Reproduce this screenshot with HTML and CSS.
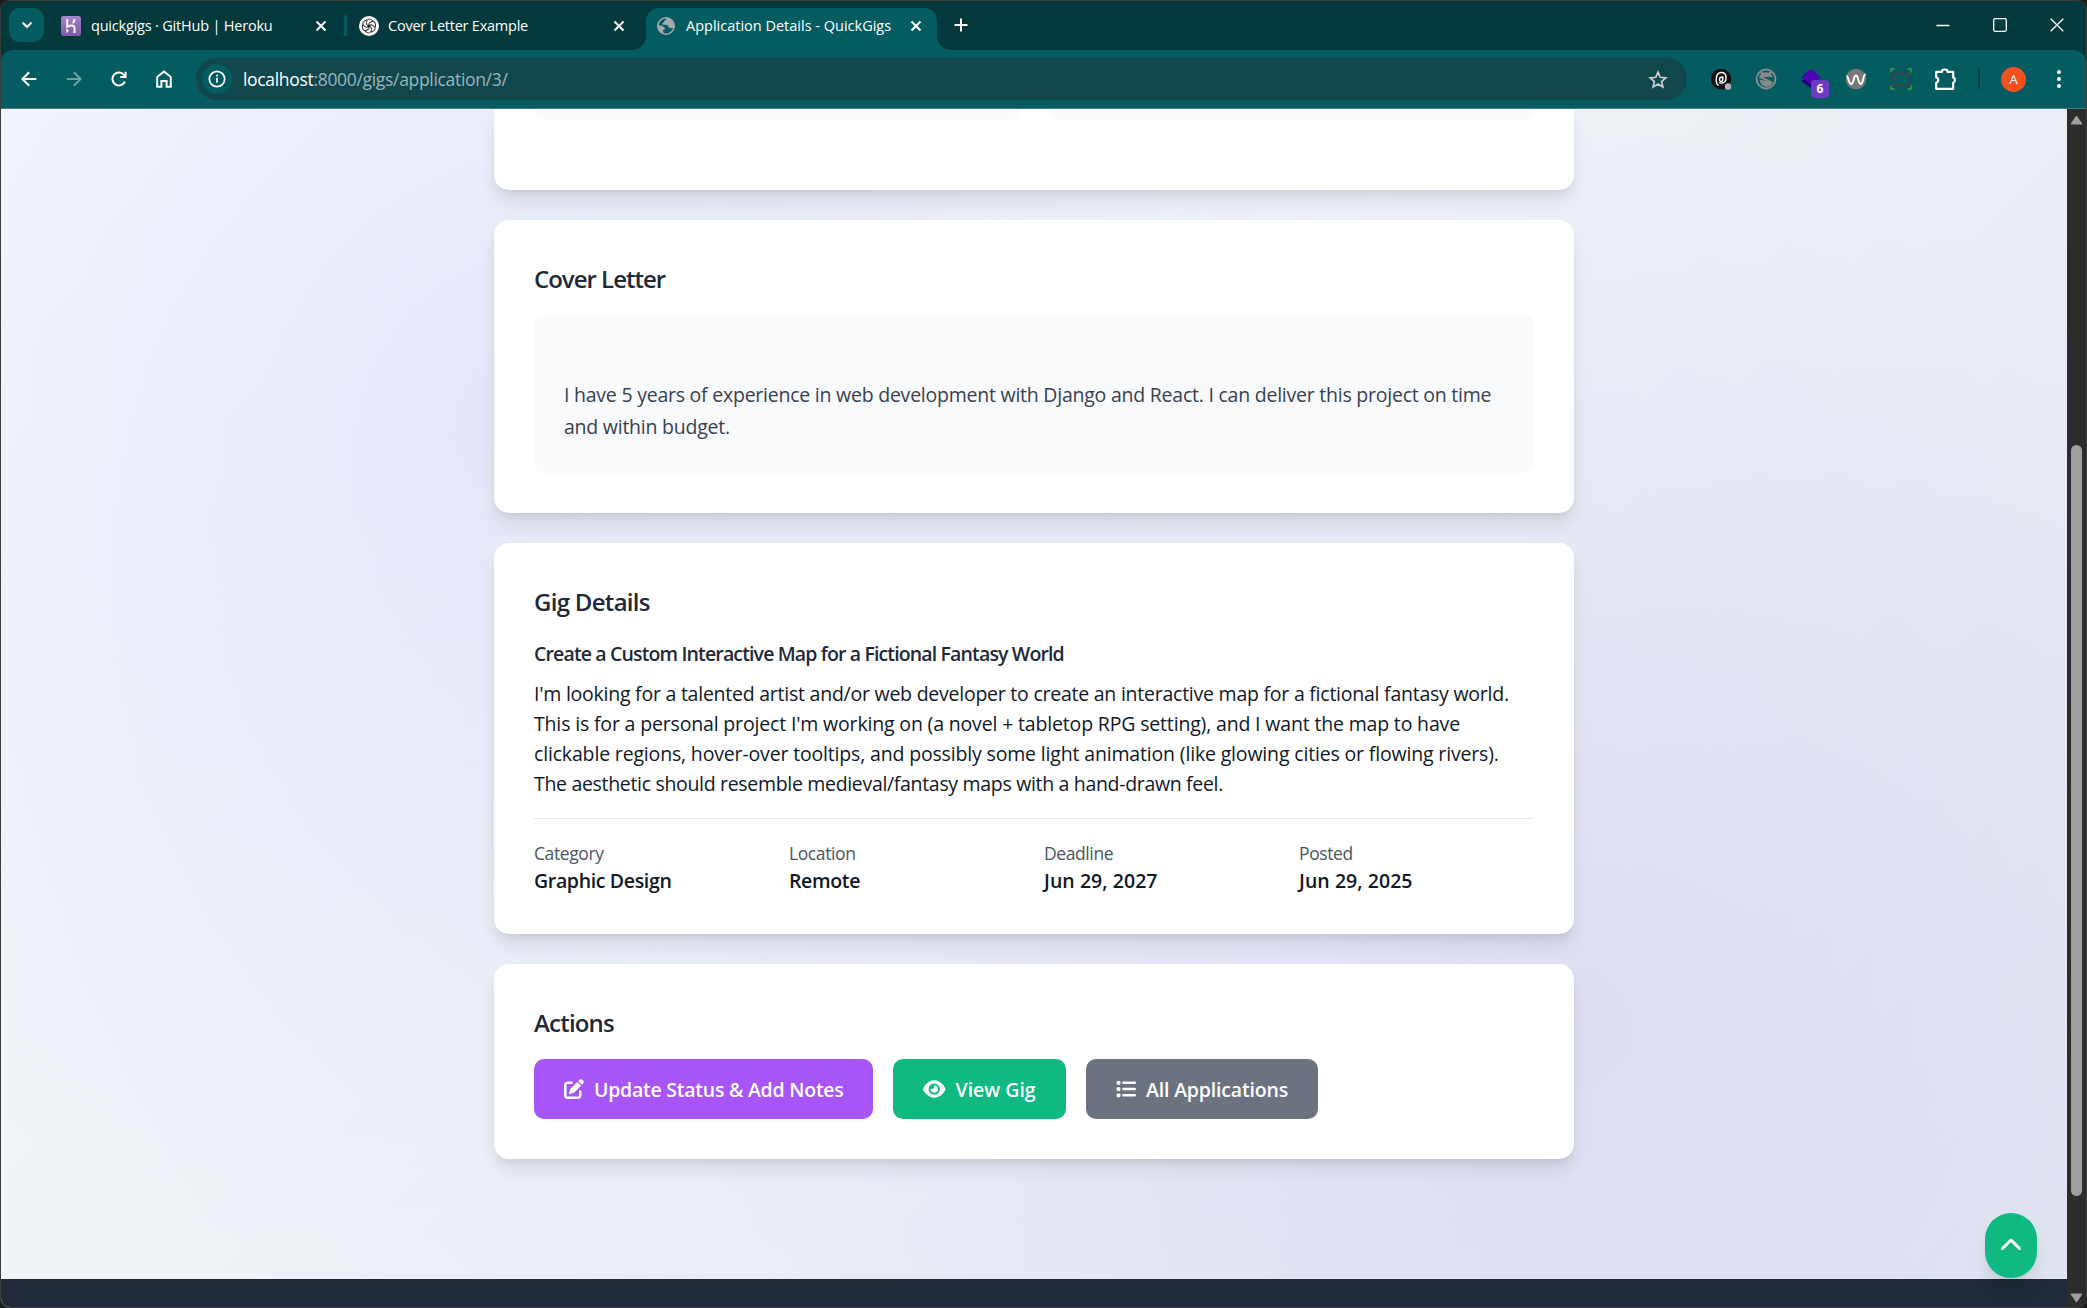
FILE: index.html
```
<!DOCTYPE html>
<html lang="en">
<head>
<meta charset="utf-8">
<title>Application Details - QuickGigs</title>
<link rel="stylesheet" href="styles.css">
</head>
<body>
<div class="window">
  <header class="tabstrip">
    <button class="tab-search" aria-label="Search tabs"><svg width="12" height="8" viewBox="0 0 12 8"><path d="M1.500 1.500 6 6l4.500-4.500" fill="none" stroke="#fff" stroke-width="2"/></svg></button>
    <div class="tab tab-first">
      <svg class="favicon" width="20" height="20" viewBox="0 0 20 20"><defs><linearGradient id="hk" x2="0" y2="1"><stop offset="0" stop-color="#a584cc"/><stop offset="1" stop-color="#7e58a8"/></linearGradient></defs><rect width="20" height="20" rx="2.500" fill="url(#hk)"/><path d="M6.200 3v7.800c2.600-1.300 7.300-2.200 7.300.6V17M13.500 3c0 1.800-.7 3-1.700 4" fill="none" stroke="#fff" stroke-width="1.900"/><path d="M5.300 12.500 8 14.800l-2.700 2.400z" fill="#fff"/></svg>
      <span class="tab-title title-heroku">quickgigs · GitHub | Heroku</span>
      <svg class="close" width="12" height="12" viewBox="0 0 12 12"><path d="m1.500 1.500 9 9m0-9-9 9"/></svg>
    </div>
    <i class="tab-sep"></i>
    <div class="tab tab-second">
      <svg class="favicon" width="20" height="20" viewBox="0 0 20 20"><circle cx="10" cy="10" r="10" fill="#fff"/><g fill="none" stroke="#222" stroke-width=".9"><path id="petal" d="M7.600 8.600V5.700a2.800 2.800 0 0 1 4.300-2.100l2.500 1.500M7.600 8.600l3.900 2.300"/><use href="#petal" transform="rotate(60 10 10)"/><use href="#petal" transform="rotate(120 10 10)"/><use href="#petal" transform="rotate(180 10 10)"/><use href="#petal" transform="rotate(240 10 10)"/><use href="#petal" transform="rotate(300 10 10)"/></g></svg>
      <span class="tab-title title-letter">Cover Letter Example</span>
      <svg class="close" width="12" height="12" viewBox="0 0 12 12"><path d="m1.500 1.500 9 9m0-9-9 9"/></svg>
    </div>
    <div class="tab tab-active">
      <svg class="favicon" width="18" height="18" viewBox="0 0 18 18"><circle cx="9" cy="9" r="8.200" fill="none" stroke="#a3abb0" stroke-width="1.600"/><path d="M9.500 1c-.2 1.500-.4 2.300-2 2.600C6.800 5 6.400 5.700 5.600 6.200v1.600h4.200c1 .2 1.300 1 1.200 1.900l1.700 1.100c1 .7 2.700.2 4 .2A8.500 8.500 0 0 0 9.500 1zM1 8.500h3.500l3.300 2.300v1.400l-2 1 1.200 3.500A8.300 8.300 0 0 1 1 8.500z" fill="#a3abb0"/></svg>
      <span class="tab-title">Application Details - QuickGigs</span>
      <svg class="close" width="12" height="12" viewBox="0 0 12 12"><path d="m1.500 1.500 9 9m0-9-9 9"/></svg>
    </div>
    <svg class="new-tab" width="14" height="14" viewBox="0 0 14 14"><path d="M7 .5v13M.5 7h13" stroke="#fff" stroke-width="2"/></svg>
    <div class="window-controls">
      <svg width="14" height="14" viewBox="0 0 14 14"><path d="M.5 7.500h13"/></svg>
      <svg width="14" height="14" viewBox="0 0 14 14"><rect x=".7" y=".7" width="12.600" height="12.600" rx="1.500"/></svg>
      <svg width="14" height="14" viewBox="0 0 14 14"><path d="m.7.7 12.600 12.600m0-12.600L.7 13.300"/></svg>
    </div>
  </header>

  <nav class="toolbar">
    <button class="tool" aria-label="Back"><svg width="16" height="16" viewBox="0 0 16 16"><path d="M15.300 8H2M8.200 1.200 1.400 8l6.800 6.800"/></svg></button>
    <button class="tool tool-off" aria-label="Forward"><svg width="16" height="16" viewBox="0 0 16 16"><path d="M.7 8H14M7.800 1.200 14.600 8l-6.800 6.800"/></svg></button>
    <button class="tool" aria-label="Reload"><svg width="16" height="16" viewBox="0 0 16 16"><path d="M13.900 10.500A6.500 6.500 0 1 1 13 3.800l1.200 1.700M14.600.7v5.200H9.300"/></svg></button>
    <button class="tool" aria-label="Home"><svg width="16" height="18" viewBox="0 0 16 18"><path d="M1.200 16.800V7L8 1.500 14.800 7v9.800h-4.200v-5.900H5.400v5.900z"/></svg></button>
    <div class="omnibox">
      <span class="site-info"><svg width="18" height="18" viewBox="0 0 18 18"><circle cx="9" cy="9" r="7.700" fill="none" stroke="#fff" stroke-width="1.700"/><path d="M9 7.800v5M9 4.800v1.700" stroke="#fff" stroke-width="1.700"/></svg></span>
      <span class="url"><b>localhost</b>:8000/gigs/application/3/</span>
      <svg class="star" width="20" height="19" viewBox="0 0 20 19"><path d="m10 2.200 2.200 5.100 5.600.5-4.200 3.700 1.300 5.500L10 14.100 5.100 17l1.300-5.500-4.200-3.700 5.600-.5z" fill="none" stroke="#c8cdd0" stroke-width="1.700"/></svg>
    </div>
    <div class="extensions">
      <span class="tool"><svg width="22" height="22" viewBox="0 0 22 22"><circle cx="11" cy="11" r="10.300" fill="#111"/><path d="M12.800 8.200v3.300c0 2.500-3.300 2.800-3.300 0s3.300-3 3.300-.5M8.500 17.500c-3.500-2.500-3.200-13 2.700-13 6.500 0 6 9.500 1.300 10.500-2 .4-3.500-.5-3.500-.5" fill="none" stroke="#fff" stroke-width="1.400"/><circle cx="18" cy="18.500" r="3.200" fill="#b5b5b5"/></svg></span>
      <span class="tool"><svg width="22" height="22" viewBox="0 0 22 22"><circle cx="11" cy="11" r="9.400" fill="none" stroke="#85898a" stroke-width="2"/><path d="M7 5.500 6 3M15 5.500 16 3M6 8c2-3.500 8-3.500 10 0zM4.500 8.500l13 6.500M6 13c1.500 5.500 8 6 10 2.500z" fill="#85898a" stroke="#85898a" stroke-width="2.200"/></svg></span>
      <span class="tool tool-badge"><svg width="22" height="22" viewBox="0 0 22 22"><path d="m1 13 10-5 10 5-10 7z" fill="#24007f"/><path d="m1 9 10-8 10 8-10 7z" fill="#4b05b2"/></svg><b class="badge">6</b></span>
      <span class="tool"><svg width="22" height="22" viewBox="0 0 22 22"><circle cx="11" cy="11" r="10.300" fill="#787878"/><path d="M1.500 8c2 0 2 8 4.800 8s2-8.500 4.700-8.500 2 8.500 4.700 8.500 2-8 4.800-10" fill="none" stroke="#fff" stroke-width="1.900"/></svg></span>
      <span class="tool"><svg width="22" height="22" viewBox="0 0 22 22"><path d="M1 4.500V1h3.500M17.500 1H21v3.500M1 17.500V21h3.500M17.500 21H21v-3.500" fill="none" stroke="#2f8f3a" stroke-width="1.900"/><rect x="3.500" y="5.500" width="15" height="11.500" fill="none" stroke="#3b4649" stroke-width="2"/></svg></span>
      <span class="tool"><svg width="24" height="24" viewBox="0 0 22 22"><path d="M2 4.500h5.200a2.600 2.200 0 0 1 5.200 0h5.200v5a2.200 2.600 0 0 1 0 5V20H2v-5.500a2.600 2.600 0 0 0 0-5z" fill="none" stroke="#fff" stroke-width="2" stroke-linejoin="round"/></svg></span>
      <i class="tool-sep"></i>
      <span class="tool"><b class="avatar">A</b></span>
      <span class="tool"><svg width="4" height="18" viewBox="0 0 4 18"><g fill="#fff"><circle cx="2" cy="2" r="2"/><circle cx="2" cy="9" r="2"/><circle cx="2" cy="16" r="2"/></g></svg></span>
    </div>
  </nav>

  <div class="viewport">
    <div class="page">
      <main class="content">
        <section class="card card-summary"><div class="stub"></div><div class="stub"></div></section>
        <section class="card card-letter">
          <h2>Cover Letter</h2>
          <div class="letter"><p>I have 5 years of experience in web development with Django and React. I can deliver this project on time<br>and within budget.</p></div>
        </section>
        <section class="card card-gig">
          <h2 class="h-gig">Gig Details</h2>
          <h3>Create a Custom Interactive Map for a Fictional Fantasy World</h3>
          <p class="description">I'm looking for a talented artist and/or web developer to create an interactive map for a fictional fantasy world.<br><span class="loose">This is for a personal project I'm working on (a novel + tabletop RPG setting), and I want the map to have<br>clickable regions, hover-over tooltips, and possibly some light animation (like glowing cities or flowing rivers).</span><br><span class="tight">The aesthetic should resemble medieval/fantasy maps with a hand-drawn feel.</span></p>
          <dl class="facts">
            <div><dt>Category</dt><dd>Graphic Design</dd></div>
            <div><dt>Location</dt><dd>Remote</dd></div>
            <div><dt>Deadline</dt><dd class="date">Jun 29, 2027</dd></div>
            <div><dt>Posted</dt><dd class="date">Jun 29, 2025</dd></div>
          </dl>
        </section>
        <section class="card card-actions">
          <h2 class="h-actions">Actions</h2>
          <div class="buttons">
            <a class="btn btn-update"><svg width="20" height="20" viewBox="0 0 512 512"><path fill="#fff" d="M471.600 21.700c-21.900-21.900-57.300-21.900-79.200 0L362.300 51.700l97.900 97.900 30.100-30.100c21.900-21.900 21.900-57.300 0-79.200L471.600 21.700zm-299.200 220c-6.100 6.100-10.800 13.600-13.500 21.900l-29.600 88.800c-2.900 8.600-.6 18.100 5.800 24.600s15.900 8.700 24.600 5.800l88.800-29.600c8.200-2.700 15.700-7.400 21.900-13.500L437.700 172.300 339.700 74.300 172.400 241.700zM96 64C43 64 0 107 0 160V416c0 53 43 96 96 96H352c53 0 96-43 96-96V320c0-17.700-14.300-32-32-32s-32 14.300-32 32v96c0 17.700-14.300 32-32 32H96c-17.700 0-32-14.300-32-32V160c0-17.700 14.300-32 32-32h96c17.700 0 32-14.300 32-32s-14.300-32-32-32H96z"/></svg>Update Status &amp; Add Notes</a>
            <a class="btn btn-view"><svg width="22.500" height="20" viewBox="0 0 576 512"><path fill="#fff" d="M288 32c-80.800 0-145.500 36.800-192.600 80.600C48.600 156 17.300 208 2.500 243.700c-3.300 7.900-3.300 16.700 0 24.600C17.300 304 48.600 356 95.400 399.400C142.500 443.200 207.200 480 288 480s145.500-36.800 192.600-80.600c46.800-43.500 78.100-95.400 93-131.100c3.300-7.900 3.300-16.700 0-24.600c-14.900-35.700-46.200-87.700-93-131.100C433.500 68.800 368.800 32 288 32zM144 256a144 144 0 1 1 288 0 144 144 0 1 1 -288 0zm144-64c0 35.300-28.700 64-64 64c-7.100 0-13.900-1.200-20.300-3.300c-5.500-1.800-11.900 1.600-11.700 7.400c.3 6.900 1.300 13.800 3.200 20.700c13.700 51.200 66.400 81.600 117.600 67.900s81.600-66.400 67.900-117.600c-11.100-41.500-47.800-69.400-88.600-71.100c-5.800-.2-9.200 6.100-7.400 11.700c2.100 6.400 3.300 13.200 3.300 20.300z"/></svg>View Gig</a>
            <a class="btn btn-all"><svg width="20" height="20" viewBox="0 0 512 512"><g fill="#fff"><rect x="16" y="48" width="96" height="96" rx="24"/><rect x="16" y="208" width="96" height="96" rx="24"/><rect x="16" y="368" width="96" height="96" rx="24"/><rect x="160" y="64" width="352" height="64" rx="32"/><rect x="160" y="224" width="352" height="64" rx="32"/><rect x="160" y="384" width="352" height="64" rx="32"/></g></svg>All Applications</a>
          </div>
        </section>
      </main>
      <footer class="footer"></footer>
      <a class="to-top"><svg width="22" height="14" viewBox="0 0 22 14"><path d="m2.500 11.500 8.500-8.500 8.500 8.500" fill="none" stroke="#fff" stroke-width="3" stroke-linecap="round" stroke-linejoin="round"/></svg></a>
    </div>
    <div class="scrollbar">
      <svg width="13" height="10" viewBox="0 0 13 10"><path d="M6.500 1 12 9H1z" fill="#9f9f9f" stroke="#9f9f9f" stroke-linejoin="round"/></svg>
      <i class="thumb"></i>
      <svg class="arrow-down" width="13" height="10" viewBox="0 0 13 10"><path d="M6.500 9 12 1H1z" fill="#9f9f9f" stroke="#9f9f9f" stroke-linejoin="round"/></svg>
    </div>
  </div>
</div>
</body>
</html>
```
FILE: styles.css
```
* { box-sizing: border-box; }
body { margin: 0; background: #1c1c1c; font-family: "Open Sans", "Noto Sans", sans-serif; }
button { border: 0; padding: 0; background: none; }
h2, h3, p, dl, dd { margin: 0; }
svg { display: block; flex: none; }

.window {
  width: 2087px; height: 1308px; overflow: hidden;
  display: flex; flex-direction: column;
  border: 1px solid #3d3d3d; border-radius: 10px;
  background: #01393d;
}

/* Tab strip */
.tabstrip { height: 49px; flex: none; display: flex; align-items: flex-start; padding: 7px 22px 0 8px; }
.tab-search { width: 35px; height: 34px; border-radius: 11px; background: #045c61; display: grid; place-items: center; }
.tab { height: 42px; display: flex; align-items: center; padding-bottom: 7px; color: #fff; }
.tab-title { flex: 1; font-size: 14.500px; line-height: 20px; white-space: nowrap; margin-left: 10px; }
.title-heroku { letter-spacing: -0.200px; }
.title-letter { letter-spacing: -0.230px; }
.close { fill: none; stroke: #fff; stroke-width: 2; }
.tab-first { width: 266px; margin-left: 17px; }
.tab-sep { width: 3px; height: 21px; margin: 7px 0 0 17px; border-radius: 2px; background: #045c61; }
.tab-second { width: 265px; margin-left: 12px; }
.tab-second .tab-title { margin-left: 9px; }
.tab-second .close { margin-right: -1px; }
.tab-active {
  position: relative; width: 291px; margin-left: 22px; padding: 0 15px 7px 11px;
  background: #045c61; border-radius: 13px 13px 0 0;
}
.tab-active .tab-title { margin-left: 11px; }
.tab-active::before, .tab-active::after { content: ""; position: absolute; bottom: 0; width: 13px; height: 13px; }
.tab-active::before { left: -13px; background: radial-gradient(circle at 0 0, transparent 12.500px, #045c61 13px); }
.tab-active::after { right: -13px; background: radial-gradient(circle at 100% 0, transparent 12.500px, #045c61 13px); }
.new-tab { margin: 10px 0 0 17px; }
.window-controls { margin: 10px 0 0 auto; display: flex; gap: 43px; fill: none; stroke: #fff; stroke-width: 1.300; }

/* Toolbar */
.toolbar {
  height: 59px; flex: none; display: flex; align-items: center; padding: 0 5px;
  background: #045c61; border-bottom: 1px solid #3e8085; border-radius: 12px 12px 0 0;
}
.tool { width: 45px; height: 42px; flex: none; display: grid; place-items: center; fill: none; stroke: #fff; stroke-width: 2; }
.tool-off { opacity: .42; }
.extensions .tool { stroke: none; }
.omnibox { flex: 1; height: 42px; margin-left: 10px; display: flex; align-items: center; padding: 0 19px 0 6px; border-radius: 21px; background: #0f474d; }
.site-info { width: 30px; height: 30px; border-radius: 50%; background: #045c61; display: grid; place-items: center; }
.url { flex: 1; margin-left: 11px; font-size: 17.500px; line-height: 24px; letter-spacing: -0.320px; color: #9bb5b8; }
.url b { font-weight: 400; color: #fff; }
.extensions { display: flex; align-items: center; margin-left: 11px; }
.tool-badge { position: relative; }
.badge {
  position: absolute; left: 23px; top: 22px; width: 18px; height: 18px; border-radius: 4px;
  background: #6e3bc4; color: #fff; font-size: 12px; line-height: 18px; text-align: center;
}
.tool-sep { width: 2px; height: 20px; margin: 0 11px 0 10px; background: #014146; }
.avatar { width: 25px; height: 25px; border-radius: 50%; background: #f4511e; color: #fff; font-size: 13px; font-weight: 400; line-height: 25px; text-align: center; }

/* Page */
.viewport { flex: 1; min-height: 0; display: flex; }
.page {
  position: relative; flex: 1; display: flex; flex-direction: column; align-items: center; overflow: hidden;
  background:
    radial-gradient(circle at 25% 25%, rgba(99, 102, 241, .1) 0%, transparent 50%),
    radial-gradient(circle at 75% 75%, rgba(139, 92, 246, .1) 0%, transparent 50%),
    linear-gradient(135deg, #f8fafc 0%, #e2e8f0 100%);
}
.content { width: 1080px; flex: 1; display: flex; flex-direction: column; gap: 30px; }
.card {
  padding: 40px; border-radius: 15px; background: #fff;
  box-shadow: 0 12.500px 18.750px -3.750px rgba(0, 0, 0, .1), 0 5px 7.500px -2.500px rgba(0, 0, 0, .05);
}
.card-summary { height: 81px; padding-top: 0; border-radius: 0 0 15px 15px; display: grid; grid-template-columns: 1fr 1fr; gap: 30px; }
.stub { height: 11px; border-radius: 0 0 10px 10px; background: #f9fafb; }
.card h2 { font-size: 24px; line-height: 38px; font-weight: 600; letter-spacing: -1px; color: #1f2937; }
.card .h-gig { letter-spacing: -0.700px; }
.card .h-actions { letter-spacing: -0.800px; }
.card-letter { height: 293px; }
.letter { height: 158px; margin-top: 17px; padding: 64px 30px 0; border-radius: 10px; background: #f9fafb; }
.letter p { font-size: 19.500px; line-height: 32px; letter-spacing: -0.236px; color: #374151; white-space: nowrap; }
.card-gig { height: 391px; }
.card h3 { margin-top: 18px; font-size: 19.500px; line-height: 30px; font-weight: 600; letter-spacing: -0.860px; color: #1f2937; }
.description { margin-top: 10px; font-size: 19.500px; line-height: 30px; letter-spacing: -0.240px; color: #111827; white-space: nowrap; }
.loose { letter-spacing: -0.165px; }
.tight { letter-spacing: -0.320px; }
.facts { margin-top: 19px; padding-top: 21px; border-top: 1px solid #e5e7eb; display: grid; grid-template-columns: repeat(4, 1fr); gap: 20px; }
.facts dt { font-size: 17.500px; line-height: 26px; letter-spacing: -0.400px; color: #4b5563; }
.facts dd { font-size: 19.500px; line-height: 29px; font-weight: 600; letter-spacing: -0.340px; color: #111827; }
.facts .date { letter-spacing: 0.050px; }
.card-actions { height: 195px; }
.buttons { display: flex; gap: 20px; margin-top: 17px; }
.btn { height: 60px; display: flex; align-items: center; gap: 10px; padding: 0 30px; border-radius: 10px; color: #fff; font-size: 19.500px; font-weight: 600; white-space: nowrap; }
.btn-update { width: 339px; letter-spacing: -0.250px; background: #a855f7; }
.btn-view { width: 173px; background: #10b981; }
.btn-all { width: 232px; letter-spacing: -0.170px; background: #6b7280; }
.footer { width: 100%; height: 28px; flex: none; background: #1f2937; }
.to-top {
  position: absolute; right: 30px; bottom: 29px; width: 52px; height: 65px; border-radius: 26px;
  display: grid; place-items: center; padding-bottom: 3px; background: #10b981;
  box-shadow: 0 12.500px 18.750px -3.750px rgba(0, 0, 0, .1), 0 5px 7.500px -2.500px rgba(0, 0, 0, .05);
}

/* Scrollbar */
.scrollbar { width: 19px; flex: none; display: flex; flex-direction: column; align-items: center; background: #2c2c2c; padding: 6px 0 4px; }
.thumb { width: 11px; height: 751px; margin-top: 320px; border-radius: 6px; background: #9f9f9f; }
.arrow-down { margin-top: auto; }
```
